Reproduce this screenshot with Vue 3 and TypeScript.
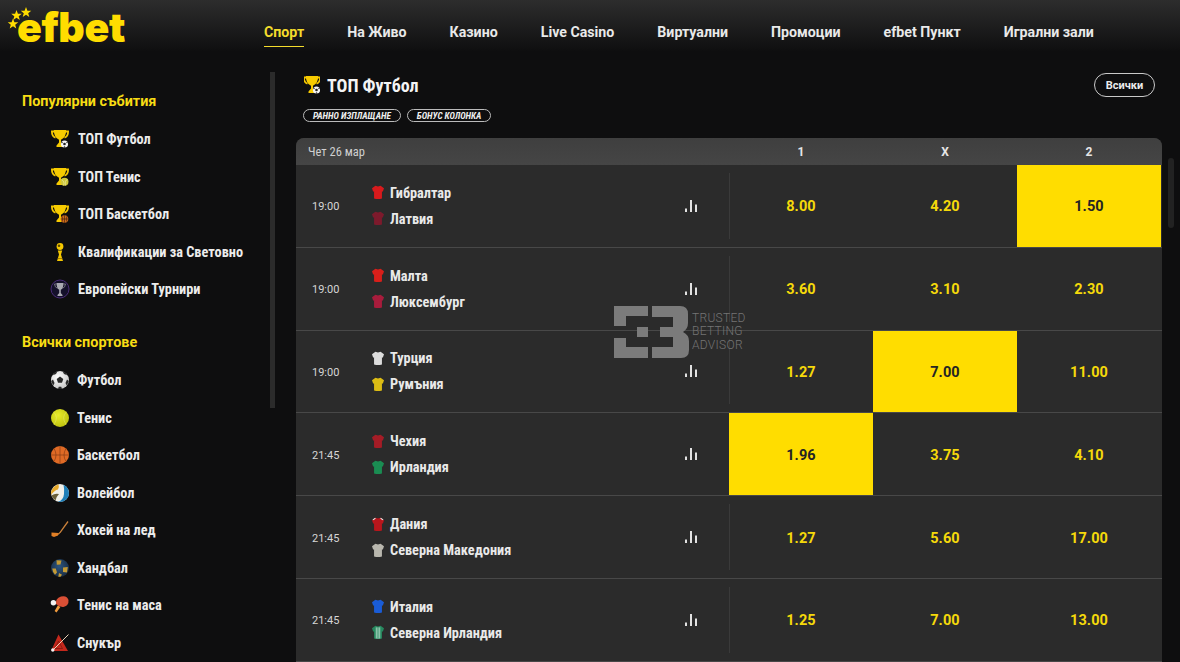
<script setup lang="ts">
type Jersey = { color: string; trim?: string; stripes?: string };
type Team = { name: string; jersey: Jersey };
type Match = { time: string; home: Team; away: Team; odds: string[]; hot: number };

const nav = ["Спорт", "На Живо", "Казино", "Live Casino", "Виртуални", "Промоции", "efbet Пункт", "Игрални зали"];

const popular = [
  { label: "ТОП Футбол", icon: "cupFootball" },
  { label: "ТОП Тенис", icon: "cupTennis" },
  { label: "ТОП Баскетбол", icon: "cupBasket" },
  { label: "Квалификации за Световно", icon: "worldCup" },
  { label: "Европейски Турнири", icon: "europe" },
];

const sports = [
  { label: "Футбол", icon: "football" },
  { label: "Тенис", icon: "tennis" },
  { label: "Баскетбол", icon: "basket" },
  { label: "Волейбол", icon: "volley" },
  { label: "Хокей на лед", icon: "hockey" },
  { label: "Хандбал", icon: "handball" },
  { label: "Тенис на маса", icon: "pingpong" },
  { label: "Снукър", icon: "snooker" },
];

const stars = [
  { x: 13, y: 24 },
  { x: 16.5, y: 15.5 },
  { x: 26, y: 12.5 },
];

const matches: Match[] = [
  {
    time: "19:00",
    home: { name: "Гибралтар", jersey: { color: "#d81a1c" } },
    away: { name: "Латвия", jersey: { color: "#7c1a2c" } },
    odds: ["8.00", "4.20", "1.50"],
    hot: 2,
  },
  {
    time: "19:00",
    home: { name: "Малта", jersey: { color: "#d81f1a" } },
    away: { name: "Люксембург", jersey: { color: "#a81c3c" } },
    odds: ["3.60", "3.10", "2.30"],
    hot: -1,
  },
  {
    time: "19:00",
    home: { name: "Турция", jersey: { color: "#dcdcdc" } },
    away: { name: "Румъния", jersey: { color: "#dcbc14" } },
    odds: ["1.27", "7.00", "11.00"],
    hot: 1,
  },
  {
    time: "21:45",
    home: { name: "Чехия", jersey: { color: "#a51c26" } },
    away: { name: "Ирландия", jersey: { color: "#1a8c52" } },
    odds: ["1.96", "3.75", "4.10"],
    hot: 0,
  },
  {
    time: "21:45",
    home: { name: "Дания", jersey: { color: "#b8161c", trim: "#e8e8e8" } },
    away: { name: "Северна Македония", jersey: { color: "#b9b7ae" } },
    odds: ["1.27", "5.60", "17.00"],
    hot: -1,
  },
  {
    time: "21:45",
    home: { name: "Италия", jersey: { color: "#1a5cd6" } },
    away: { name: "Северна Ирландия", jersey: { color: "#27895f", stripes: "#cfe8dc" } },
    odds: ["1.25", "7.00", "13.00"],
    hot: -1,
  },
];
</script>

<template>
  <div class="page">
    <header class="topbar">
      <div class="logo">
        <svg class="logo-stars" viewBox="0 0 34 34" width="34" height="34">
          <polygon
            v-for="s in stars"
            :key="s.x"
            fill="#ffdd00"
            points="0,-5.500 1.400,-1.800 5.300,-1.700 2.200,.7 3.300,4.500 0,2.300 -3.300,4.500 -2.200,.7 -5.300,-1.700 -1.400,-1.800"
            :transform="`translate(${s.x} ${s.y})`"
          />
        </svg>
        <span class="logo-text">efbet</span>
      </div>
      <nav class="nav">
        <a v-for="(item, i) in nav" :key="item" :class="['nav-item', { active: i === 0 }]">{{ item }}</a>
      </nav>
    </header>

    <div class="content">
      <aside class="sidebar">
        <div class="side-list">
          <h3 class="side-title">Популярни събития</h3>
          <div v-for="item in popular" :key="item.label" class="side-row">
            <span class="side-icon"><svg viewBox="0 0 20 20" width="20" height="20"><use :href="'#' + item.icon" /></svg></span>
            <span class="side-label">{{ item.label }}</span>
          </div>
          <h3 class="side-title second">Всички спортове</h3>
          <div v-for="item in sports" :key="item.label" class="side-row sport">
            <span class="side-icon"><svg viewBox="0 0 20 20" width="20" height="20"><use :href="'#' + item.icon" /></svg></span>
            <span class="side-label">{{ item.label }}</span>
          </div>
        </div>
        <div class="side-thumb"></div>
      </aside>

      <main class="main">
        <div class="title-row">
          <svg viewBox="2 0 16 20" width="16" height="20"><use href="#cupFootball" /></svg>
          <h2 class="title">ТОП Футбол</h2>
          <button class="all-btn">Всички</button>
        </div>
        <div class="tags">
          <span class="tag">РАННО ИЗПЛАЩАНЕ</span>
          <span class="tag">БОНУС КОЛОНКА</span>
        </div>

        <section class="panel">
          <div class="panel-head">
            <span class="date">Чет 26 мар</span>
            <div class="odds-cols">
              <span>1</span>
              <span>X</span>
              <span>2</span>
            </div>
          </div>
          <div v-for="m in matches" :key="m.home.name" class="match">
            <span class="time">{{ m.time }}</span>
            <div class="teams">
              <div v-for="team in [m.home, m.away]" :key="team.name" class="team">
                <svg class="jersey" viewBox="0 0 14 16" width="12" height="15">
                  <path :fill="team.jersey.color" d="M4 .2 7 1 10 .2 14 3 12.600 7 11.600 6.600 11.600 15Q7 16.200 2.400 15L2.400 6.600 1.400 7 0 3Z" />
                  <path v-if="team.jersey.trim" :stroke="team.jersey.trim" stroke-width="1.300" fill="none" d="M1 2.600 4 .8M13 2.600 10 .8" />
                  <path v-if="team.jersey.stripes" :stroke="team.jersey.stripes" stroke-width=".9" fill="none" d="M5 2V15M7 2V15.300M9 2V15" />
                </svg>
                <span class="team-name">{{ team.name }}</span>
              </div>
            </div>
            <svg class="stats" viewBox="0 0 12 12" width="12" height="12">
              <path fill="#e2e2e2" d="M0 8.500h2V12H0zM5 0h2v12H5zM10 4.500h2V12h-2z" />
            </svg>
            <div class="odds">
              <span class="sep"></span>
              <span v-for="(odd, i) in m.odds" :key="i" :class="['odd', { hot: m.hot === i }]">{{ odd }}</span>
            </div>
          </div>
        </section>

        <div class="watermark">
          <svg viewBox="0 0 75 52" width="75" height="52">
            <path fill="#7b7b7b" d="M0 0H34V10H12V20H0ZM23 21H34V31H23ZM0 32H12V41H34V52H0ZM38 0H66Q74 0 74 8V17Q74 23 69 26 75 29 75 35V44Q75 52 67 52H38V41H59V31H46V21H59V11H38Z" />
          </svg>
          <div class="wm-text">TRUSTED<br />BETTING<br />ADVISOR</div>
        </div>
      </main>
      <div class="main-thumb"></div>
    </div>

    <svg class="sprites" width="0" height="0">
      <defs>
        <g id="cup">
          <path fill="none" stroke="#f5c800" stroke-width="1.800" d="M4.500 2.500H1.900Q1.900 7.500 5.500 8.700M15.500 2.500H18.100Q18.100 7.500 14.500 8.700" />
          <path fill="#f7cb00" d="M3.800 1H16.200Q16.200 8.700 11 10.700V13.500L13.500 16.500V18H6.500V16.500L9 13.500V10.700Q3.800 8.700 3.800 1Z" />
        </g>
        <g id="cupFootball">
          <use href="#cup" />
          <circle cx="14.500" cy="15" r="3.600" fill="#f4f4f4" />
          <circle cx="14.500" cy="15" r="1.300" fill="#222" />
          <circle cx="12" cy="13.500" r=".7" fill="#222" />
          <circle cx="17" cy="13.500" r=".7" fill="#222" />
          <circle cx="14.500" cy="18" r=".7" fill="#222" />
        </g>
        <g id="cupTennis">
          <use href="#cup" />
          <circle cx="14.500" cy="14.800" r="4" fill="#cfc83a" />
          <path fill="none" stroke="#f0eeb0" stroke-width=".6" d="M11.500 12.500Q15 14.500 13.500 18.600M17.500 12.500Q14.500 13 15.500 18.600" />
        </g>
        <g id="cupBasket">
          <use href="#cup" />
          <circle cx="14.500" cy="15" r="3.800" fill="#cc6a1c" />
          <path fill="none" stroke="#3a1c08" stroke-width=".6" d="M10.800 15H18.200M14.500 11.200V18.800M12 12.200Q13.500 15 12 17.800M17 12.200Q15.500 15 17 17.800" />
        </g>
        <g id="worldCup">
          <circle cx="10" cy="4.500" r="3.400" fill="#f5c800" />
          <circle cx="9" cy="3.800" r="1.300" fill="#5a4700" />
          <path fill="#f5c800" d="M7.800 8.500H12.200L11 12.500 12.200 16.500 13 19H7L7.800 16.500 9 12.500Z" />
          <path fill="#a87f00" d="M7.800 16H12.200V17H7.800Z" />
        </g>
        <g id="europe">
          <circle cx="10" cy="10" r="9" fill="#14102a" stroke="#4a2c78" stroke-width="1" />
          <path fill="#a9a9b2" d="M6.500 4H13.500Q13.500 9.500 10.800 10.800V14L12.500 16V17H7.500V16L9.200 14V10.800Q6.500 9.500 6.500 4Z" />
          <path fill="none" stroke="#8a8a92" stroke-width=".8" d="M6.500 5H4.500Q4.800 8.500 7.500 9.300M13.500 5H15.500Q15.200 8.500 12.500 9.300" />
        </g>
        <radialGradient id="ballShade" cx=".4" cy=".35" r=".8">
          <stop offset="0" stop-color="#fff" />
          <stop offset="1" stop-color="#bdbdbd" />
        </radialGradient>
        <g id="football">
          <circle cx="10" cy="10" r="9" fill="url(#ballShade)" />
          <path fill="#2a2a2a" d="M10 6.500 13.300 8.900 12 12.800H8L6.700 8.900ZM3 3.800Q5 1.800 7.500 1.300L6 4 3.400 5ZM17 3.800Q15 1.800 12.500 1.300L14 4 16.600 5ZM1.200 11 3 9.500 4.500 13 3.500 15.300Q1.700 13.500 1.200 11ZM18.800 11 17 9.500 15.500 13 16.500 15.300Q18.300 13.500 18.800 11ZM8 18.800 8.800 16.800H11.200L12 18.800Q10 19.300 8 18.800Z" />
        </g>
        <radialGradient id="tennisFill" cx=".4" cy=".35" r=".75">
          <stop offset="0" stop-color="#e8ec2a" />
          <stop offset="1" stop-color="#b9bd0c" />
        </radialGradient>
        <g id="tennis">
          <circle cx="10" cy="10" r="9" fill="url(#tennisFill)" />
          <path fill="none" stroke="#eef18a" stroke-width=".4" d="M3.500 3.800Q9 9 4 16.500M16.500 3.800Q11 9 16 16.500" />
        </g>
        <g id="basket">
          <circle cx="10" cy="10" r="9" fill="#df6a25" />
          <path fill="none" stroke="#7c3610" stroke-width=".6" d="M1 10H19M10 1V19M4 3.500Q8 10 4 16.500M16 3.500Q12 10 16 16.500" />
        </g>
        <g id="volley">
          <circle cx="10" cy="10" r="9" fill="#f0f0ea" />
          <path fill="#e6a92a" d="M1.200 8.500Q3 3 8.500 1.200 9.500 4.500 8 6.500 4.500 7 1.200 12Z" />
          <path fill="#1f7fb8" d="M13.500 1.800Q19 4.500 19 10 19 15.500 14 18 11 19.200 8 18.800 13.500 17 14 11 14.500 6 13.500 1.800Z" />
          <path fill="#6a5f3a" d="M1.500 12.500Q5 10 9 11 6 14 5.500 17.500 2.500 15.500 1.500 12.500Z" />
        </g>
        <g id="hockey">
          <path fill="none" stroke="#c9803a" stroke-width="1.300" d="M18 1.500 10 12.500Q9 14 7 14.500" />
          <path fill="#e07f26" d="M1.500 12.500 8.500 13 8 15.500 4 17 1.500 16Z" />
        </g>
        <radialGradient id="handShade" cx=".45" cy=".4" r=".7">
          <stop offset="0" stop-color="#2c5580" />
          <stop offset="1" stop-color="#15263a" />
        </radialGradient>
        <g id="handball">
          <circle cx="10" cy="10" r="9" fill="url(#handShade)" />
          <path fill="#c49a34" d="M6.500 2.200 11.500 2.500 10.500 6.500 6.800 6.800ZM13 9.500 17.800 9 17 14.500 13 14ZM2.200 10.500 5.800 10.500 7 14.500 5 16.800Q2.700 14.500 2.200 10.500ZM9 15 12 16.800 10.500 18.800 8.300 18.700Z" />
        </g>
        <g id="pingpong">
          <path fill="#d94f35" d="M6 9Q5 3.500 11 1.500 17 0 18.500 5 19 10.500 13.500 12 9.500 12.500 6 9Z" />
          <path fill="#ef9a3c" d="M7.800 10.600 10.400 12 6.500 17.500 4.600 16 Z" />
          <circle cx="3.400" cy="7.800" r="2.700" fill="#f2f2f2" />
        </g>
        <g id="snooker">
          <path fill="#c4281c" d="M8.500 1.500 18 18H1Z" />
          <path fill="none" stroke="#7a150f" stroke-width=".7" d="M5 15.500 8.500 8 12.500 15.500Z" />
          <path stroke="#e9d2b8" stroke-width="1" d="M18.500 1.500 3.500 16.500" />
          <circle cx="2.800" cy="17" r="1.700" fill="#f2f2f2" />
        </g>
      </defs>
    </svg>
  </div>
</template>

<style scoped>
.page {
  height: 662px;
  width: 1180px;
  overflow: hidden;
  background: #0e0e0f;
  font-family: Roboto, "Liberation Sans", sans-serif;
  color: #f1f1f1;
  position: relative;
}

.topbar {
  height: 52px;
  display: flex;
  background: linear-gradient(180deg, #2d2d2d 0%, #0e0e0f 100%);
}

.logo {
  width: 264px;
  position: relative;
  flex: none;
  padding: 3px 0 0 17px;
  box-sizing: border-box;
}

.logo-stars {
  position: absolute;
  left: 0;
  top: 0;
}

.logo-text {
  font-family: Inter, "Liberation Sans", sans-serif;
  font-weight: 900;
  font-size: 41px;
  line-height: 48px;
  letter-spacing: -.4px;
  color: #ffdd00;
}

.nav {
  display: flex;
  gap: 43px;
  height: 47px;
  align-items: center;
  padding-top: 17px;
  box-sizing: border-box;
}

.nav-item {
  font-size: 14.200px;
  font-weight: 700;
  line-height: 30px;
  height: 29.500px;
  color: #e9e9e9;
  box-sizing: border-box;
}

.nav-item.active {
  color: #f4dc2c;
  border-bottom: 1.500px solid #f4dc2c;
}

.content {
  display: flex;
  height: 610px;
}

.sidebar {
  width: 296px;
  flex: none;
  display: flex;
  align-items: flex-start;
}

.side-list {
  width: 270px;
  flex: none;
  padding: 40px 0 0 22px;
  box-sizing: border-box;
}

.side-thumb {
  width: 5px;
  height: 336px;
  margin-top: 20px;
  background: #2b2b2b;
}

.side-title {
  margin: 0;
  font-size: 14.400px;
  line-height: 20px;
  font-weight: 700;
  color: #f7dc14;
}

.side-title.second {
  margin-top: 25.250px;
}

.side-row {
  height: 37.500px;
  display: flex;
  align-items: center;
  padding-left: 28px;
  gap: 8px;
}

.side-row.sport {
  gap: 7px;
}

.side-title + .side-row {
  margin-top: 8.250px;
}

.side-icon {
  width: 20px;
  height: 20px;
  flex: none;
  display: block;
}

.side-icon svg {
  display: block;
}

.side-label {
  font-size: 14.300px;
  font-weight: 700;
  font-stretch: 75%;
  color: #ececec;
  white-space: nowrap;
}

.main {
  width: 866px;
  flex: none;
  position: relative;
}

.main-thumb {
  width: 6px;
  height: 70px;
  margin: 106px 0 0 6px;
  border-radius: 3px;
  background: #222;
}

.title-row {
  height: 26px;
  margin-top: 20px;
  padding-left: 8px;
  display: flex;
  align-items: center;
  gap: 7px;
  padding-right: 7px;
}

.title {
  margin: 0;
  font-size: 18px;
  font-weight: 700;
  font-stretch: 75%;
  color: #f4f4f4;
}

.all-btn {
  margin-left: auto;
  width: 61px;
  height: 24px;
  padding: 0;
  background: transparent;
  border: 1px solid #c9c9c9;
  border-radius: 12px;
  color: #ececec;
  font-family: inherit;
  font-size: 11px;
  font-weight: 700;
}

.tags {
  display: flex;
  gap: 6px;
  margin-top: 11px;
  padding-left: 7px;
}

.tag {
  height: 13px;
  line-height: 11.500px;
  padding: 0 9px;
  border: 1px solid #bbb;
  border-radius: 7px;
  box-sizing: border-box;
  font-size: 9.200px;
  font-weight: 700;
  font-style: italic;
  font-stretch: 75%;
  color: #eee;
  white-space: nowrap;
}

.panel {
  margin-top: 16px;
  border-radius: 8px 8px 0 0;
  overflow: hidden;
  background: #2b2b2b;
}

.panel-head {
  height: 27px;
  background: linear-gradient(180deg, #3f3f3f, #454545);
  display: flex;
  align-items: center;
  justify-content: space-between;
  padding-left: 12px;
  padding-right: 1px;
}

.date {
  font-size: 12.500px;
  font-stretch: 75%;
  color: #cfcfcf;
}

.odds-cols {
  display: grid;
  grid-template-columns: repeat(3, 144px);
  padding-top: 1px;
  font-size: 12px;
  font-weight: 700;
  color: #e6e6e6;
  text-align: center;
}

.match {
  height: 82.800px;
  box-sizing: border-box;
  border-bottom: 1px solid #484848;
  display: flex;
  align-items: center;
  padding-right: 1px;
}

.time {
  width: 76px;
  flex: none;
  padding: 2px 0 0 16px;
  box-sizing: border-box;
  font-size: 11px;
  color: #d6d6d6;
}

.teams {
  flex: 1;
  display: flex;
  flex-direction: column;
  gap: 7px;
}

.team {
  display: flex;
  align-items: center;
  gap: 6px;
  height: 19px;
}

.jersey {
  flex: none;
}

.team-name {
  font-size: 14.300px;
  font-weight: 700;
  font-stretch: 75%;
  color: #e9e9e9;
}

.stats {
  flex: none;
  margin-right: 32px;
}

.odds {
  width: 432px;
  flex: none;
  align-self: stretch;
  display: grid;
  grid-template-columns: repeat(3, 144px);
  position: relative;
}

.sep {
  position: absolute;
  left: 0;
  top: 8px;
  bottom: 8px;
  width: 1px;
  background: #3a3a3a;
}

.odd {
  display: flex;
  align-items: center;
  justify-content: center;
  padding-top: 2px;
  box-sizing: border-box;
  font-size: 14.500px;
  font-weight: 700;
  letter-spacing: .1px;
  color: #f5d90a;
  position: relative;
}

.odd.hot {
  background: #ffdd00;
  color: #242424;
}

.watermark {
  position: absolute;
  left: 318px;
  top: 254px;
  display: flex;
  gap: 3px;
  align-items: center;
  pointer-events: none;
}

.wm-text {
  font-size: 12px;
  line-height: 13.500px;
  color: #747474;
  letter-spacing: .3px;
  font-weight: 300;
}

.sprites {
  position: absolute;
}
</style>

<style>
html,
body {
  background: #0e0e0f;
}
</style>
